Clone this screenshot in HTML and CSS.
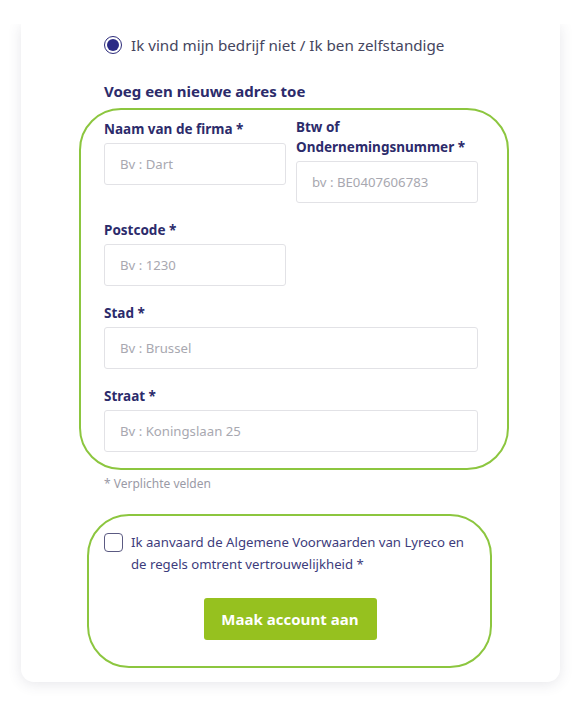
FILE: index.html
```html
<!DOCTYPE html>
<html lang="nl">
<head>
<meta charset="utf-8">
<title>Account aanmaken</title>
<link rel="stylesheet" href="styles.css">
</head>
<body>
<div class="viewport">
  <div class="clip">
    <form class="card">
      <label class="radio-row">
        <span class="radio"><span class="radio-dot"></span></span>
        <span class="radio-text">Ik vind mijn bedrijf niet / Ik ben zelfstandige</span>
      </label>
      <h2 class="section-title">Voeg een nieuwe adres toe</h2>
      <div class="highlight address">
        <div class="row">
          <div class="field col first">
            <label class="label">Naam van de firma *</label>
            <div class="input">Bv : Dart</div>
          </div>
          <div class="field col">
            <label class="label">Btw of<br>Ondernemingsnummer *</label>
            <div class="input">bv : BE0407606783</div>
          </div>
        </div>
        <div class="field half">
          <label class="label">Postcode *</label>
          <div class="input">Bv : 1230</div>
        </div>
        <div class="field">
          <label class="label">Stad *</label>
          <div class="input">Bv : Brussel</div>
        </div>
        <div class="field last">
          <label class="label">Straat *</label>
          <div class="input">Bv : Koningslaan 25</div>
        </div>
      </div>
      <p class="required-note">* Verplichte velden</p>
      <div class="highlight terms">
        <label class="check-row">
          <span class="checkbox"></span>
          <span class="check-text">Ik aanvaard de Algemene Voorwaarden van Lyreco en de regels omtrent vertrouwelijkheid *</span>
        </label>
        <div class="actions">
          <button type="button" class="btn">Maak account aan</button>
        </div>
      </div>
    </form>
  </div>
</div>
</body>
</html>
```
FILE: styles.css
```css
* { box-sizing: border-box; }
html, body { margin: 0; padding: 0; background: #ffffff; }
body {
  font-family: "Noto Sans", "Open Sans", Arial, sans-serif;
  color: #2c2b6b;
}
.viewport { padding-top: 24px; }
.clip { overflow: hidden; padding-bottom: 24px; }
.card {
  margin: 0 15px 0 21px;
  background: #fff;
  border-radius: 0 0 13px 13px;
  box-shadow: 0 2px 14px rgba(60, 60, 90, 0.13);
  padding: 9px 51px 14px 58px;
}
.radio-row {
  display: flex;
  align-items: center;
  gap: 9px;
  margin-left: 25px;
  height: 24px;
}
.radio {
  width: 18px;
  height: 18px;
  border-radius: 50%;
  border: 1.5px solid #2c2b7a;
  display: flex;
  align-items: center;
  justify-content: center;
  flex: none;
}
.radio-dot {
  width: 12px;
  height: 12px;
  border-radius: 50%;
  background: #2a2a85;
}
.radio-text {
  font-size: 15.2px;
  color: #45455e;
}
.section-title {
  margin: 24px 0 0 25px;
  font-size: 15px;
  font-weight: 700;
  line-height: 20px;
  color: #2c2b6b;
}
.highlight {
  border: 2px solid #8cc63f;
  border-radius: 42px;
}
.address {
  margin-top: 7px;
  padding: 7px 29px 16px 23px;
}
.row {
  display: flex;
  gap: 10px;
}
.col { flex: 1; }
.col.first { padding-top: 2px; }
.field { margin-bottom: 17px; }
.field.last { margin-bottom: 0; }
.half { width: 182px; }
.label {
  display: block;
  font-size: 13.5px;
  font-weight: 700;
  line-height: 20px;
  color: #2c2b6b;
  margin-bottom: 4px;
}
.input {
  height: 42px;
  border: 1px solid #e2e2e6;
  border-radius: 3px;
  padding: 0 15px;
  display: flex;
  align-items: center;
  font-size: 13.2px;
  color: #a8a8b0;
  background: #fff;
}
.required-note {
  margin: 6px 0 0 25px;
  font-size: 12px;
  line-height: 16px;
  color: #9a9aa6;
}
.terms {
  margin: 22px 17px 0 8px;
  padding: 15px 14px 26px 15px;
}
.check-row {
  display: flex;
  align-items: flex-start;
  gap: 8px;
}
.checkbox {
  flex: none;
  width: 19px;
  height: 19px;
  margin-top: 2px;
  border: 1.5px solid #5b5a82;
  border-radius: 4px;
}
.check-text {
  font-size: 13.2px;
  line-height: 22px;
  color: #3d3c7c;
}
.actions {
  display: flex;
  justify-content: center;
  margin-top: 23px;
}
.btn {
  width: 173px;
  height: 42px;
  border: none;
  border-radius: 3px;
  background: #96c11f;
  color: #fff;
  font-family: "Open Sans", "Noto Sans", Arial, sans-serif;
  font-size: 15px;
  font-weight: 700;
  cursor: pointer;
}
```
